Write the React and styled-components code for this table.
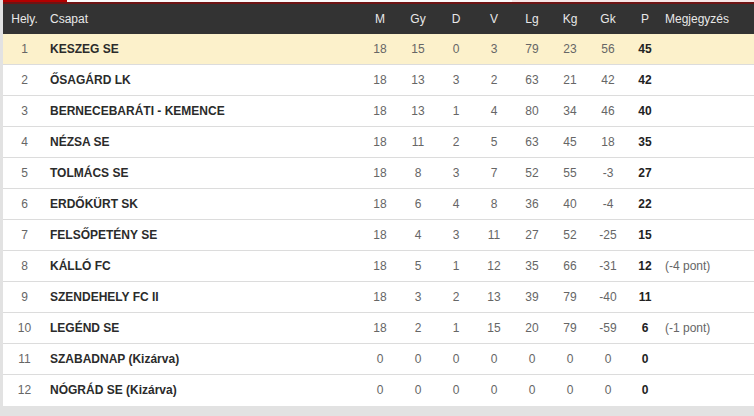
import React from "react";
import styled, { createGlobalStyle } from "styled-components";

const GlobalStyle = createGlobalStyle`
  html, body {
    margin: 0;
    padding: 0;
    background: #e2e2e2;
    font-family: "Liberation Sans", Arial, sans-serif;
  }
`;

const Wrapper = styled.div`
  padding-left: 3px;
  width: 751px;
`;

const TabStrip = styled.div`
  display: flex;
  height: 2px;
  background: #f6e6e6;
  div {
    flex: none;
  }
  .active {
    width: 64px;
    background: #b30000;
  }
  .plain {
    width: 445px;
    background: #fbfbfb;
  }
`;

const Rule = styled.div`
  height: 2px;
  background: #6e1414;
`;

const Table = styled.table`
  width: 751px;
  border-collapse: separate;
  border-spacing: 0;
  table-layout: fixed;
  font-size: 12px;
  background: #fff;
`;

const Head = styled.th`
  line-height: 30px;
  padding: 0;
  padding-left: ${(p) => p.$pad || 0}px;
  background: #333;
  color: #e8e8e8;
  font-weight: normal;
  text-align: ${(p) => p.$align || "center"};
`;

const Row = styled.tr`
  background: ${(p) => (p.$highlight ? "#fcf1cb" : "#fff")};
  td {
    line-height: 30px;
    padding: 0;
    border-bottom: 1px solid #dcdcdc;
  }
  &:last-child td {
    border-bottom-color: #fff;
  }
`;

const Cell = styled.td`
  color: #666;
  text-align: center;
`;

const Team = styled.td`
  && {
    padding-left: 4px;
  }
  color: #2b2b2b;
  font-weight: bold;
`;

const Points = styled.td`
  text-align: center;
  color: #222;
  font-weight: bold;
`;

const Note = styled.td`
  && {
    padding-left: 2px;
  }
  color: #666;
`;

const rows = [
  [1, "KESZEG SE", 18, 15, 0, 3, 79, 23, 56, 45, ""],
  [2, "ŐSAGÁRD LK", 18, 13, 3, 2, 63, 21, 42, 42, ""],
  [3, "BERNECEBARÁTI - KEMENCE", 18, 13, 1, 4, 80, 34, 46, 40, ""],
  [4, "NÉZSA SE", 18, 11, 2, 5, 63, 45, 18, 35, ""],
  [5, "TOLMÁCS SE", 18, 8, 3, 7, 52, 55, -3, 27, ""],
  [6, "ERDŐKÜRT SK", 18, 6, 4, 8, 36, 40, -4, 22, ""],
  [7, "FELSŐPETÉNY SE", 18, 4, 3, 11, 27, 52, -25, 15, ""],
  [8, "KÁLLÓ FC", 18, 5, 1, 12, 35, 66, -31, 12, "(-4 pont)"],
  [9, "SZENDEHELY FC II", 18, 3, 2, 13, 39, 79, -40, 11, ""],
  [10, "LEGÉND SE", 18, 2, 1, 15, 20, 79, -59, 6, "(-1 pont)"],
  [11, "SZABADNAP (Kizárva)", 0, 0, 0, 0, 0, 0, 0, 0, ""],
  [12, "NÓGRÁD SE (Kizárva)", 0, 0, 0, 0, 0, 0, 0, 0, ""],
];

const stats = ["M", "Gy", "D", "V", "Lg", "Kg", "Gk"];

const App = () => {
  return (
    <Wrapper>
      <GlobalStyle />
      <TabStrip>
        <div className="active" />
        <div className="plain" />
      </TabStrip>
      <Rule />
      <Table>
        <colgroup>
          <col style={{ width: 43 }} />
          <col style={{ width: 315 }} />
          {stats.map((s) => (
            <col key={s} style={{ width: 38 }} />
          ))}
          <col style={{ width: 36 }} />
          <col />
        </colgroup>
        <thead>
          <tr>
            <Head>Hely.</Head>
            <Head $align="left" $pad={4}>
              Csapat
            </Head>
            {stats.map((s) => (
              <Head key={s}>{s}</Head>
            ))}
            <Head>P</Head>
            <Head $align="left" $pad={2}>
              Megjegyzés
            </Head>
          </tr>
        </thead>
        <tbody>
          {rows.map((r) => (
            <Row key={r[0]} $highlight={r[0] === 1}>
              <Cell>{r[0]}</Cell>
              <Team>{r[1]}</Team>
              {r.slice(2, 9).map((v, i) => (
                <Cell key={i}>{v}</Cell>
              ))}
              <Points>{r[9]}</Points>
              <Note>{r[10]}</Note>
            </Row>
          ))}
        </tbody>
      </Table>
    </Wrapper>
  );
};

export default App;
